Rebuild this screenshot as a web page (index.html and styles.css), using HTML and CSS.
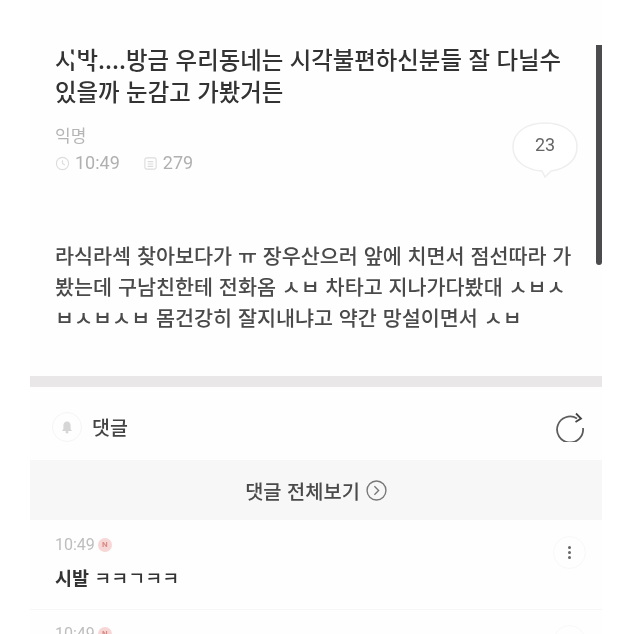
FILE: index.html
```html
<!DOCTYPE html>
<html lang="ko">
<head>
<meta charset="utf-8">
<title>게시글</title>
<link rel="stylesheet" href="styles.css">
</head>
<body>
<main class="screen">
  <div class="scrollbar"></div>
  <section class="post">
    <h1 class="title"><span class="censor">시박<i class="smear"></i></span>....방금 우리동네는 시각불편하신분들 잘 다닐수<br>있을까 눈감고 가봤거든</h1>
    <div class="info">
      <div>
        <div class="author">익명</div>
        <div class="meta">
          <svg class="meta-icon" viewBox="0 0 16 16"><circle cx="8" cy="8" r="6.5"/><path d="M8 4.5V8l2.5 1.5"/></svg>
          <span>10:49</span>
          <span class="sep"></span>
          <svg class="meta-icon" viewBox="0 0 16 16"><rect x="2" y="2" width="12" height="12" rx="2"/><path d="M5 6h6M5 8.5h6M5 11h6"/></svg>
          <span>279</span>
        </div>
      </div>
      <div class="bubble">
        <svg class="bubble-shape" viewBox="0 0 66 56"><path d="M33 1C50 1 65 9 65 25C65 40 52 47 39 49L33 55L30 49C15 48 1 40 1 25C1 9 16 1 33 1Z"/></svg>
        <span class="bubble-count">23</span>
      </div>
    </div>
    <p class="body">라식라섹 찾아보다가 ㅠ 장우산으러 앞에 치면서 점선따라 가<br>봤는데 구남친한테 전화옴 ㅅㅂ 차타고 지나가다봤대 ㅅㅂㅅ<br>ㅂㅅㅂㅅㅂ 몸건강히 잘지내냐고 약간 망설이면서 ㅅㅂ</p>
  </section>
  <div class="divider"></div>
  <section class="comments-head">
    <div class="comments-title">
      <span class="bell">
        <svg viewBox="0 0 16 16"><path d="M8 2.5c-2.4 0-3.6 1.8-3.6 4V10L3 12h10l-1.4-2V6.500c0-2.200-1.200-4-3.600-4Z"/><circle cx="8" cy="13" r="1.500"/></svg>
      </span>
      <span class="comments-label">댓글</span>
    </div>
    <svg class="refresh" viewBox="0 0 30 30"><path d="M22 6.500A13 13 0 1 0 28 16"/><path class="arrow" d="M21 1.500L26 6.500L20.500 10"/></svg>
  </section>
  <a class="all-comments">
    <span>댓글 전체보기</span>
    <svg class="chevron" viewBox="0 0 20 20"><circle cx="10" cy="10" r="9"/><path d="M8 6l4 4-4 4"/></svg>
  </a>
  <article class="comment">
    <div>
      <div class="comment-time">10:49<span class="new-badge">N</span></div>
      <div class="comment-text"><b class="comment-strong">시발</b> ㅋㅋㄱㅋㅋ</div>
    </div>
    <span class="more"><i></i><i></i><i></i></span>
  </article>
  <article class="comment comment-next">
    <div>
      <div class="comment-time">10:49<span class="new-badge">N</span></div>
    </div>
    <span class="more"><i></i><i></i><i></i></span>
  </article>
</main>
</body>
</html>
```
FILE: styles.css
```css
* { box-sizing: border-box; }
html, body { margin: 0; height: 100%; background: #fff; overflow: hidden; }
body { font-family: "Noto Sans CJK KR", "Noto Sans", sans-serif; }
.screen {
  position: relative;
  width: 572px;
  height: 634px;
  margin-left: 30px;
  padding-top: 43px;
  background: #fefefe;
  overflow: hidden;
  filter: blur(0.7px);
}
.scrollbar {
  position: absolute;
  top: 45px;
  right: 0;
  width: 6px;
  height: 220px;
  border-radius: 0 0 3px 3px;
  background: #4c4c4e;
}
.post { padding: 0 0 0 25px; height: 333px; }
.title {
  margin: 0;
  font-size: 23.400px;
  font-weight: 500;
  line-height: 32px;
  color: #333;
  white-space: nowrap;
}
.censor { position: relative; }
.smear {
  position: absolute;
  left: 9px;
  top: 15px;
  width: 24px;
  height: 7px;
  background: #fff;
  transform: rotate(32deg);
}
.info {
  display: flex;
  justify-content: space-between;
  height: 110px;
  padding: 16px 24px 0 0;
}
.author { font-size: 17px; line-height: 24px; color: #b5b5b5; }
.meta {
  display: flex;
  align-items: center;
  gap: 5px;
  margin-top: 4px;
  font-family: Roboto, sans-serif;
  font-size: 18px;
  line-height: 24px;
  color: #b0b0b0;
}
.meta-icon { width: 15px; height: 15px; fill: none; stroke: #dcdcdc; stroke-width: 1.200; }
.sep { width: 13px; }
.bubble {
  position: relative;
  width: 66px;
  height: 56px;
  margin-top: -1px;
  display: flex;
  align-items: center;
  justify-content: center;
  padding-bottom: 11px;
}
.bubble-shape { position: absolute; inset: 0; fill: #fff; stroke: #eeeeee; stroke-width: 1.500; }
.bubble-count { position: relative; font-family: Roboto, sans-serif; font-size: 18px; color: #666; }
.body {
  margin: 0;
  padding-top: 23px;
  font-size: 20.700px;
  font-weight: 500;
  line-height: 31px;
  color: #4a4a4a;
  white-space: nowrap;
}
.divider { height: 11px; background: #e9e7e7; }
.comments-head {
  display: flex;
  align-items: center;
  justify-content: space-between;
  height: 73px;
  padding: 6px 17px 0 22px;
}
.comments-title { display: flex; align-items: center; gap: 10px; }
.bell {
  width: 30px;
  height: 30px;
  border-radius: 50%;
  border: 1px solid #f5f5f5;
  display: flex;
  align-items: center;
  justify-content: center;
}
.bell svg { width: 16px; height: 16px; fill: #d6d6d6; }
.comments-label { font-size: 19.500px; font-weight: 500; color: #444; }
.refresh { width: 30px; height: 30px; fill: none; stroke: #5c5c5c; stroke-width: 1.800; }
.refresh .arrow { stroke: #444; }
.all-comments {
  display: flex;
  align-items: center;
  justify-content: center;
  gap: 6px;
  height: 60px;
  background: #f7f7f7;
  font-size: 19.800px;
  font-weight: 500;
  color: #4a4a4a;
}
.chevron { width: 21px; height: 21px; fill: none; stroke: #777; stroke-width: 1.300; }
.comment {
  display: flex;
  justify-content: space-between;
  height: 90px;
  padding: 15px 16px 0 25px;
  border-bottom: 1px solid #f7f7f7;
}
.comment-next { height: 40px; padding-top: 14px; border-bottom: 0; }
.comment-time {
  display: flex;
  align-items: center;
  gap: 3px;
  font-family: Roboto, sans-serif;
  font-size: 16px;
  line-height: 20px;
  color: #bdbdbd;
}
.new-badge {
  width: 14px;
  height: 14px;
  border-radius: 50%;
  background: #f6d7d5;
  color: #d98a86;
  font-size: 8px;
  font-weight: 700;
  line-height: 14px;
  text-align: center;
}
.comment-text { margin-top: 10px; font-size: 18.500px; font-weight: 500; line-height: 24px; color: #333; }
.comment-strong { font-weight: 700; }
.more {
  display: flex;
  flex-direction: column;
  align-items: center;
  justify-content: center;
  gap: 2px;
  width: 33px;
  height: 33px;
  border-radius: 50%;
  border: 1px solid #f8f8f8;
  margin-top: 1px;
}
.more i { width: 3px; height: 3px; border-radius: 50%; background: #666; }
```
